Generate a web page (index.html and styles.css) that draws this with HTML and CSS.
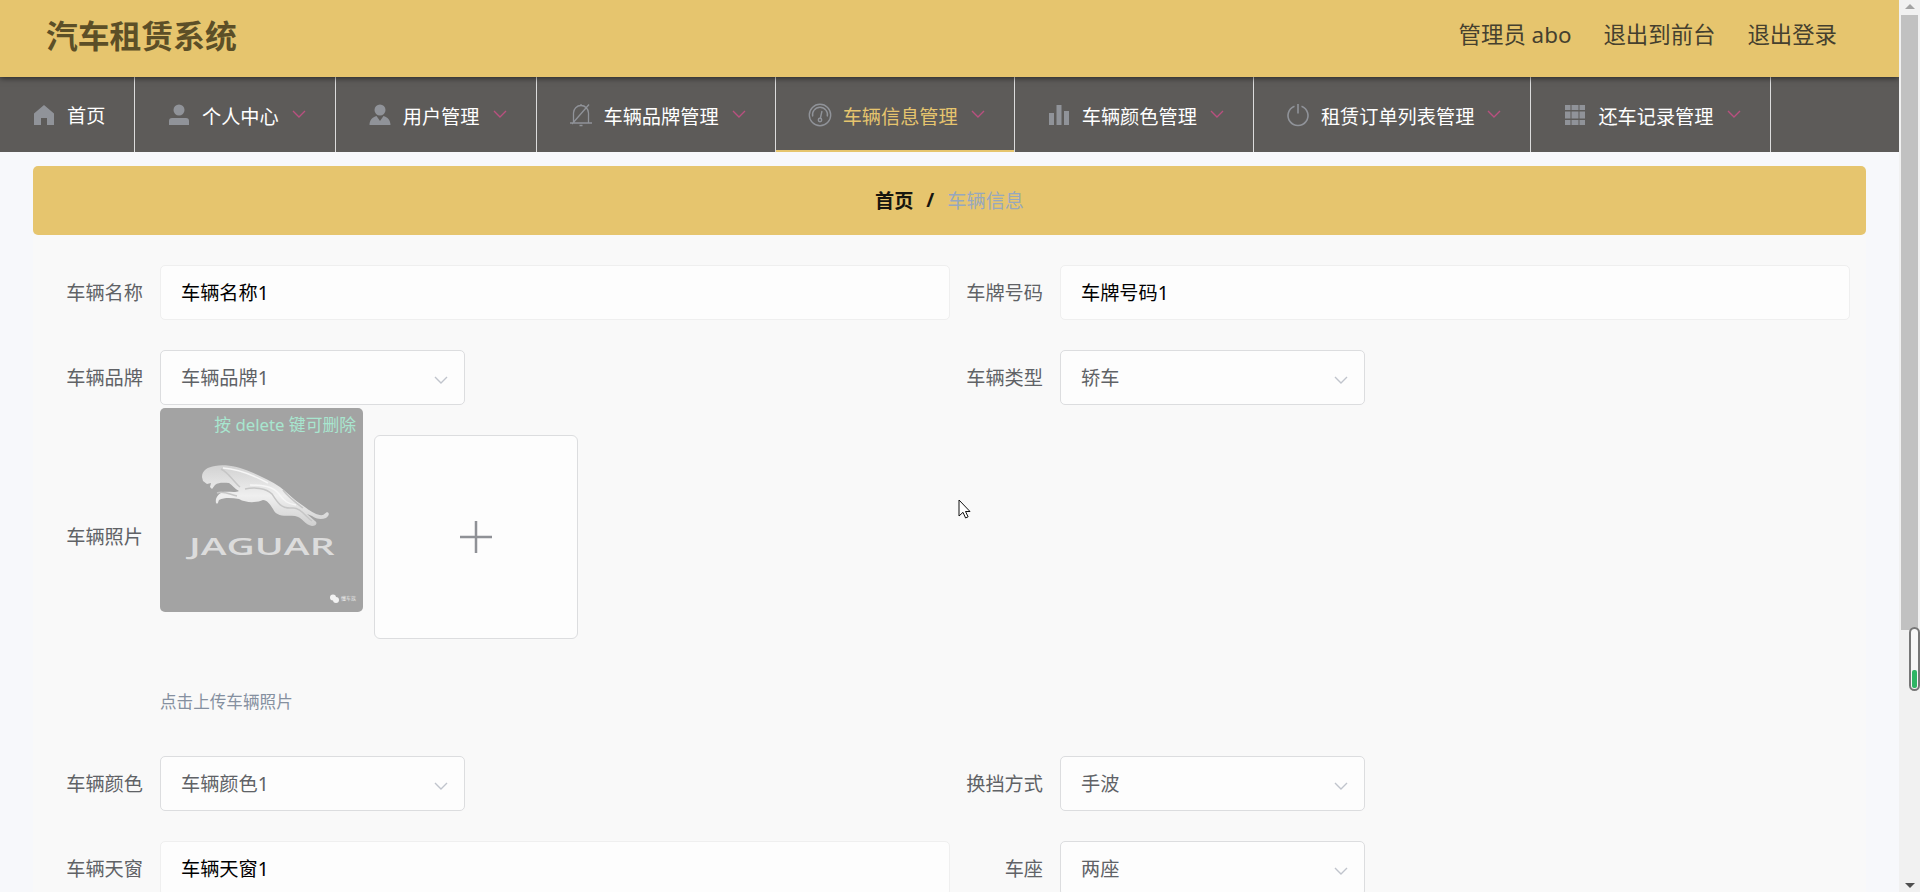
FILE: index.html
```html
<!DOCTYPE html>
<html lang="zh-CN">
<head>
  <meta charset="UTF-8" />
  <meta name="viewport" content="width=device-width, initial-scale=1.0"/>
  <title>汽车租赁系统</title>
  <link rel="stylesheet" href="styles.css">
</head>
<body>
  <svg class="defs">
    <symbol id="down" viewBox="0 0 14 8"><path d="M1 1l6 6 6-6" fill="none" stroke="currentColor" stroke-width="1.4"/></symbol>
  </svg>

  <div class="page">
    <header class="header">
      <h1 class="title">汽车租赁系统</h1>
      <div class="user-links">
        <span>管理员 abo</span>
        <span>退出到前台</span>
        <span>退出登录</span>
      </div>
    </header>

    <nav class="nav">
      <a class="nav-item home">
        <svg class="icon" viewBox="0 0 24 24"><path d="M12 2l10 8.5V22h-7v-7H9v7H2V10.500z" fill="currentColor"/></svg>
        <span>首页</span>
      </a>
      <a class="nav-item">
        <svg class="icon" viewBox="0 0 24 24"><circle cx="12" cy="7" r="5.500" fill="currentColor"/><path d="M2 22v-4q0-3 3-3h14q3 0 3 3v4z" fill="currentColor"/></svg>
        <span>个人中心</span>
        <svg class="arrow"><use href="#down"/></svg>
      </a>
      <a class="nav-item">
        <svg class="icon" viewBox="0 0 24 24"><circle cx="12" cy="7" r="5.500" fill="currentColor"/><path d="M1.500 22c0-5 3-8 7-9l3.500 5 3.500-5c4 1 7 4 7 9z" fill="currentColor"/></svg>
        <span>用户管理</span>
        <svg class="arrow"><use href="#down"/></svg>
      </a>
      <a class="nav-item">
        <svg class="icon" viewBox="0 0 24 24"><path d="M1 20h22M4.500 20V10a7.500 7.500 0 0 1 15 0v10M12 3V1M3 21L20 1.500M10.500 22.500h3" fill="none" stroke="currentColor" stroke-width="1.300"/></svg>
        <span>车辆品牌管理</span>
        <svg class="arrow"><use href="#down"/></svg>
      </a>
      <a class="nav-item active">
        <svg class="icon" viewBox="0 0 24 24"><g fill="none" stroke="currentColor" stroke-width="1.400"><circle cx="12" cy="12" r="10.700"/><path d="M4.700 13.500a7.500 7.500 0 1 1 14.600 0M12.300 15.500L14 8"/><circle cx="12" cy="17" r="1.700"/></g></svg>
        <span>车辆信息管理</span>
        <svg class="arrow"><use href="#down"/></svg>
      </a>
      <a class="nav-item">
        <svg class="icon" viewBox="0 0 24 24"><path d="M2 10h5v12H2zM9.500 2h5v20h-5zM17 8h5v14h-5z" fill="currentColor"/></svg>
        <span>车辆颜色管理</span>
        <svg class="arrow"><use href="#down"/></svg>
      </a>
      <a class="nav-item">
        <svg class="icon" viewBox="0 0 24 24"><path d="M12 1v9.500M8.500 3.200a10 10 0 1 0 7 0" fill="none" stroke="currentColor" stroke-width="1.600"/></svg>
        <span>租赁订单列表管理</span>
        <svg class="arrow"><use href="#down"/></svg>
      </a>
      <a class="nav-item">
        <svg class="icon" viewBox="0 0 24 24"><path d="M2 2h5.500v5H2zM8.500 2h7v5h-7zM16.500 2H22v5h-5.500zM2 8.500h5.500v7H2zM8.500 8.500h7v7h-7zM16.500 8.500H22v7h-5.500zM2 17h5.500v5H2zM8.500 17h7v5h-7zM16.500 17H22v5h-5.500z" fill="currentColor"/></svg>
        <span>还车记录管理</span>
        <svg class="arrow"><use href="#down"/></svg>
      </a>
    </nav>

    <main class="main">
      <div class="breadcrumb">
        <b>首页</b><b class="slash">/</b><span>车辆信息</span>
      </div>

      <form class="form">
        <div class="field">
          <label>车辆名称</label>
          <div class="input">车辆名称1</div>
        </div>
        <div class="field">
          <label>车牌号码</label>
          <div class="input">车牌号码1</div>
        </div>
        <div class="field">
          <label>车辆品牌</label>
          <div class="select">车辆品牌1<svg class="caret"><use href="#down"/></svg></div>
        </div>
        <div class="field">
          <label>车辆类型</label>
          <div class="select">轿车<svg class="caret"><use href="#down"/></svg></div>
        </div>

        <div class="field upload">
          <label>车辆照片</label>
          <div class="upload-body">
            <div class="pictures">
              <div class="photo">
                <span class="delete-tip">按 delete 键可删除</span>
                <svg class="cat" viewBox="0 0 130 66">
                  <defs>
                    <linearGradient id="silver" x1="0" y1="0" x2="0" y2="1">
                      <stop offset="0" stop-color="#d2d2d2"/>
                      <stop offset=".5" stop-color="#efefef"/>
                      <stop offset="1" stop-color="#d0d0d0"/>
                    </linearGradient>
                  </defs>
                  <path d="M2 13C2 6 8 3 15 2c11-2 24 1 36 6 9 4 20 9 29 15 8 6 14 13 22 18 8 6 15 11 21 10l4-3c3 1 2 4-1 6-5 2-10 1-14-2l-5-2 8 7c3 2 1 5-3 5-7-1-10-9-17-10-8-1-18 2-22-7-3-5-6-9-10-9-7 3-17 3-24-1-7-1-14-2-20 1-1 2-1 5-3 3-1-5 2-9 7-11 5-1 12 1 16-1-4-2-7-6-10-8-5 0-10-1-14 2l-3 4-2-2 1-4-4 1-4-3z" fill="url(#silver)"/>
                  <path d="M21 5c8 4 12 12 19 18M17 29c7-3 13 2 20 3M45 25c9-2 21-1 27 5 5 8 9 15 20 14 8-1 14 9 20 13M83 26c5 7 12 12 20 18" fill="none" stroke="#c6c6c6" stroke-width="1.500"/>
                  <path d="M23 4c16 1 32 8 45 15M50 21c12 0 23 1 29 9 5 7 9 10 17 11" fill="none" stroke="#f6f6f6" stroke-width="1.500"/>
                </svg>
                <span class="brand">JAGUAR</span>
                <span class="watermark"><svg viewBox="0 0 9 9"><circle cx="3" cy="3.500" r="3"/><circle cx="6" cy="6" r="3"/></svg>懂车族</span>
              </div>
              <div class="add">
                <svg viewBox="0 0 32 32"><path d="M16 0v32M0 16h32" stroke="#8f9196" stroke-width="2.500"/></svg>
              </div>
            </div>
            <p class="tip">点击上传车辆照片</p>
          </div>
        </div>

        <div class="field">
          <label>车辆颜色</label>
          <div class="select">车辆颜色1<svg class="caret"><use href="#down"/></svg></div>
        </div>
        <div class="field">
          <label>换挡方式</label>
          <div class="select">手波<svg class="caret"><use href="#down"/></svg></div>
        </div>
        <div class="field">
          <label>车辆天窗</label>
          <div class="input">车辆天窗1</div>
        </div>
        <div class="field">
          <label>车座</label>
          <div class="select">两座<svg class="caret"><use href="#down"/></svg></div>
        </div>
      </form>
    </main>
  </div>

  <div class="scrollbar">
    <svg class="sb-arrow" viewBox="0 0 10 5"><path d="M5 0l5 5H0z" fill="#a3a3a3"/></svg>
    <div class="thumb"></div>
    <svg class="sb-arrow" viewBox="0 0 10 5"><path d="M0 0h10L5 5z" fill="#505050"/></svg>
  </div>
  <div class="meter"><div class="meter-fill"></div></div>

  <svg class="cursor" viewBox="0 0 13 20"><path d="M1 1v16l4-3.700 2.600 5.700 2.500-1.200-2.600-5.300H12z" fill="#fff" stroke="#111"/></svg>
</body>
</html>
```

FILE: styles.css
```css
* {
  box-sizing: border-box;
}

body {
  margin: 0;
  display: flex;
  height: 100vh;
  overflow: hidden;
  background-color: #f7f8fb;
  font-family: "Noto Sans", "Noto Sans CJK SC", sans-serif;
  font-size: 19.2px;
  color: #606266;
}

.defs {
  position: absolute;
  width: 0;
  height: 0;
}

.page {
  flex: 1;
  height: 892px;
  overflow: hidden;
}

.header {
  position: relative;
  display: flex;
  justify-content: space-between;
  height: 77px;
  padding: 0 62px 10px 46px;
  align-items: center;
  background-color: #e6c56e;
  box-shadow: 0 1px 6px rgba(0, 0, 0, 0.6);
}

.title {
  margin: 0;
  font-size: 31.8px;
  font-weight: bold;
  color: #5c4f27;
}

.user-links {
  display: flex;
  gap: 32px;
  font-size: 22.4px;
  color: #45402e;
}

.nav {
  display: flex;
  height: 75px;
  background-color: #5d5b59;
}

.nav-item {
  display: flex;
  align-items: center;
  height: 75px;
  padding: 0 29px 0 32px;
  border-right: 1px solid #dcdcdc;
  color: #fff;
  white-space: nowrap;
}

.nav-item span {
  margin: 3px 13px 0 11px;
}

.nav-item.home {
  width: 135px;
  padding: 0 0 0 32px;
}

.nav-item.home span {
  margin: 0 0 0 11px;
}

.nav-item.active {
  color: #e6c56e;
  box-shadow: inset 0 -2px #e6c56e;
}

.icon {
  width: 24px;
  height: 24px;
  margin-top: 1px;
  color: #909399;
}

.arrow {
  width: 14px;
  height: 8px;
  margin-top: -2px;
  color: #b9507f;
}

.main {
  padding: 14px 33px 0;
}

.breadcrumb {
  display: flex;
  align-items: center;
  justify-content: center;
  height: 69px;
  padding-bottom: 2px;
  border-radius: 5px;
  background-color: #e6c56e;
  color: #97a8be;
}

.breadcrumb b {
  color: #17160f;
}

.breadcrumb .slash {
  margin: 0 13px;
}

.form {
  display: grid;
  grid-template-columns: 900px 900px;
  padding: 30px 16px 0;
  background-color: #f9f9f9;
}

.field {
  display: flex;
  height: 85px;
}

.field label {
  width: 111px;
  flex-shrink: 0;
  padding-right: 17px;
  line-height: 55px;
  text-align: right;
}

.input,
.select {
  height: 55px;
  padding: 0 20px;
  border: 1px solid #efefef;
  border-radius: 5px;
  background-color: #fdfdfd;
  line-height: 53px;
}

.input {
  width: 790px;
  flex-shrink: 0;
  color: #000;
}

.select {
  display: flex;
  align-items: center;
  justify-content: space-between;
  width: 305px;
  padding-right: 16px;
  border-color: #dcdddf;
}

.caret {
  width: 14px;
  height: 8px;
  margin-top: 4px;
  color: #c0c4cc;
}

.field.upload {
  grid-column: span 2;
  height: 321px;
}

.upload label {
  padding-top: 74px;
}

/* the picture row starts right under the selects above it */
.upload-body {
  margin-top: -27px;
}

.pictures {
  display: flex;
  gap: 11px;
}

.photo {
  display: flex;
  flex-direction: column;
  align-items: center;
  width: 203px;
  height: 204px;
  border-radius: 5px;
  background-color: #a3a3a3;
}

.delete-tip {
  align-self: flex-end;
  margin: 5px 7px 0 0;
  font-size: 16.8px;
  line-height: 24px;
  color: #a8e6cf;
}

.cat {
  width: 130px;
  height: 66px;
  margin: 27px 0 0 7px;
}

.brand {
  margin-top: 3px;
  font-family: "Open Sans", sans-serif;
  font-size: 23.5px;
  font-weight: 600;
  line-height: 26px;
  color: #dcdcdc;
  transform: scaleX(1.66);
}

.watermark {
  display: flex;
  align-items: center;
  gap: 2px;
  align-self: flex-end;
  margin: 34px 7px 0 0;
  font-size: 5px;
  line-height: 10px;
  color: #e6e6e6;
}

.watermark svg {
  width: 9px;
  height: 9px;
  fill: #f2f2f2;
}

.add {
  display: flex;
  align-items: center;
  justify-content: center;
  width: 204px;
  height: 204px;
  margin-top: 27px;
  border: 1px solid #dcdddf;
  border-radius: 6px;
  background-color: #fdfdfd;
}

.add svg {
  width: 32px;
  height: 32px;
}

.tip {
  margin: 51px 0 0;
  font-size: 16.6px;
  line-height: 24px;
  color: #8590a0;
}

.scrollbar {
  display: flex;
  flex-direction: column;
  align-items: center;
  width: 21px;
  height: 892px;
  padding: 4px 0;
  background-color: #f1f1f1;
}

.sb-arrow {
  width: 10px;
  height: 5px;
}

.thumb {
  width: 17px;
  height: 615px;
  margin: 6px 0 auto;
  background-color: #c1c1c1;
}

/* floating gauge over the scrollbar */
.meter {
  position: absolute;
  right: 0;
  top: 627px;
  display: flex;
  align-items: flex-end;
  width: 11px;
  height: 64px;
  padding: 1px;
  border: 2px solid #777;
  border-radius: 6px;
  background-color: #f7f7f7;
}

.meter-fill {
  width: 100%;
  height: 18px;
  border-radius: 2px;
  background-color: #2fb564;
}

.cursor {
  position: absolute;
  left: 958px;
  top: 499px;
  width: 13px;
  height: 20px;
}
```
